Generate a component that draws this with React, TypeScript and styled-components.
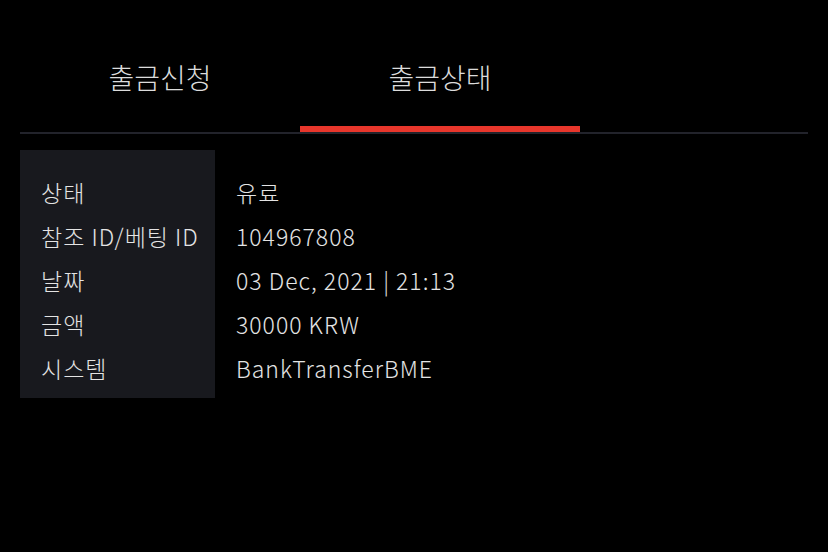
import React, { useState } from "react";
import styled, { createGlobalStyle } from "styled-components";

const GlobalStyle = createGlobalStyle`
  html, body {
    margin: 0;
    padding: 0;
    background: #000;
  }
  body {
    font-family: "Noto Sans CJK KR", "Noto Sans", sans-serif;
    color: #e2e2e2;
  }
`;

interface IRow {
  label: string;
  value: string;
}

const rows: IRow[] = [
  { label: "상태", value: "유료" },
  { label: "참조 ID/베팅 ID", value: "104967808" },
  { label: "날짜", value: "03 Dec, 2021 | 21:13" },
  { label: "금액", value: "30000 KRW" },
  { label: "시스템", value: "BankTransferBME" },
];

const tabs = ["출금신청", "출금상태"];

const App = () => {
  const [active, setActive] = useState(1);

  return (
    <>
      <GlobalStyle />
      <Page>
        <TabBar>
          {tabs.map((tab, idx) => (
            <Tab key={tab} active={idx === active} onClick={() => setActive(idx)}>
              {tab}
            </Tab>
          ))}
        </TabBar>
        <Details>
          <LabelCol>
            {rows.map((row) => (
              <Cell key={row.label}>{row.label}</Cell>
            ))}
          </LabelCol>
          <ValueCol>
            {rows.map((row) => (
              <Cell key={row.label}>{row.value}</Cell>
            ))}
          </ValueCol>
        </Details>
      </Page>
    </>
  );
};

const Page = styled.div`
  width: 828px;
  height: 552px;
  padding: 0 20px;
  box-sizing: border-box;
  background: #000;
`;

const TabBar = styled.div`
  display: flex;
  height: 134px;
  border-bottom: 2px solid #22232b;
  box-sizing: border-box;
`;

const Tab = styled.div<{ active: boolean }>`
  width: 280px;
  display: flex;
  justify-content: center;
  padding-top: 57px;
  box-sizing: border-box;
  font-size: 28px;
  font-weight: 300;
  line-height: 40px;
  color: #dcdcdc;
  cursor: pointer;
  border-bottom: 6px solid ${(p) => (p.active ? "#e8362b" : "transparent")};
`;

const Details = styled.div`
  display: flex;
  margin-top: 16px;
`;

const LabelCol = styled.div`
  width: 195px;
  box-sizing: border-box;
  background: #18191e;
  padding: 20px 0 8px 21px;
`;

const ValueCol = styled.div`
  padding: 20px 0 8px 21px;
`;

const Cell = styled.div`
  font-size: 23px;
  font-weight: 300;
  letter-spacing: 1px;
  line-height: 44px;
  height: 44px;
  color: #e4e4e4;
  white-space: nowrap;
`;

export default App;
